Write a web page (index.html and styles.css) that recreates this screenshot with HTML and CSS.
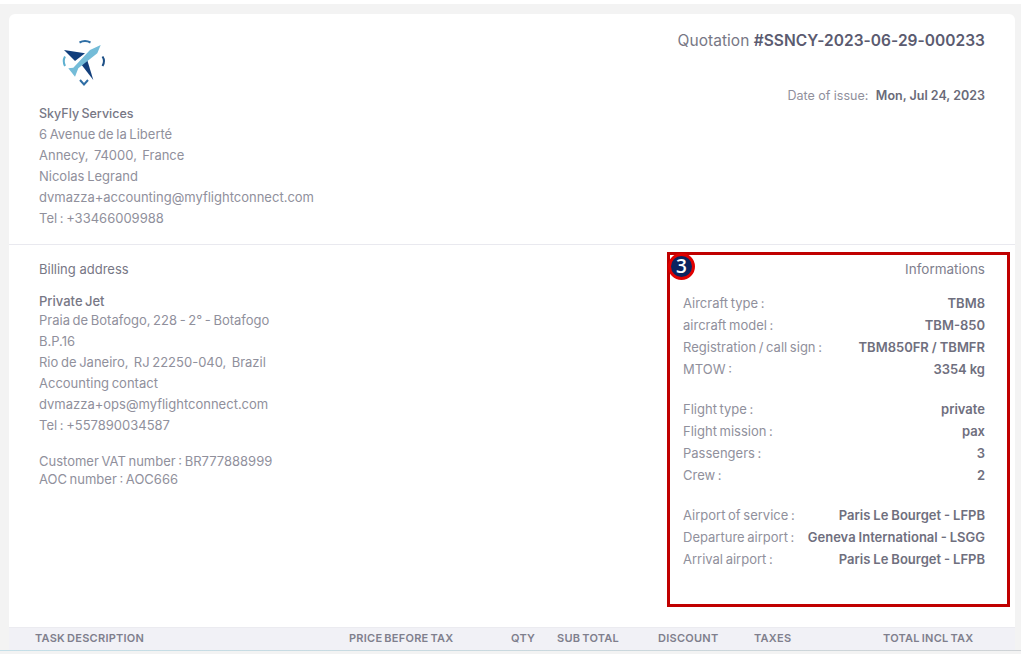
FILE: index.html
```html
<!DOCTYPE html>
<html lang="en">
<head>
<meta charset="utf-8">
<title>Quotation</title>
<link rel="stylesheet" href="styles.css">
</head>
<body>
<main class="card">
  <header class="top">
    <div class="company">
      <svg class="logo" viewBox="0 0 50 50" width="50" height="50" aria-hidden="true">
        <path d="M18.5 4.5 Q24 1.5 29.5 4.5" fill="none" stroke="#2f6ea5" stroke-width="2"/>
        <path d="M4 18.5 Q1.5 23 4 28" fill="none" stroke="#5fb0d0" stroke-width="2"/>
        <path d="M41.5 18.5 Q44.5 23 41.5 28" fill="none" stroke="#1d4f86" stroke-width="2"/>
        <path d="M19 42 L23 46.5 L27 42" fill="none" stroke="#2f6ea5" stroke-width="2"/>
        <path d="M3 12 L24 15.3 L14 23 Z" fill="#123f7c"/>
        <path d="M25.7 20.3 L32.3 42 L20.7 27 Z" fill="#123f7c"/>
        <path d="M39.7 7 L29 12 L12.3 29.7 L7.3 30.3 L14 38.7 L17.3 30.3 L36.3 15.3 Z" fill="#74bcd8"/>
      </svg>
      <p class="name">SkyFly Services</p>
      <p>6 Avenue de la Liberté</p>
      <p>Annecy,&nbsp; 74000,&nbsp; France</p>
      <p>Nicolas Legrand</p>
      <p>dvmazza+accounting@myflightconnect.com</p>
      <p>Tel : +33466009988</p>
    </div>
    <div class="quote">
      <h1>Quotation <b>#SSNCY-2023-06-29-000233</b></h1>
      <p class="issue">Date of issue: <b>Mon, Jul 24, 2023</b></p>
    </div>
  </header>
  <section class="details">
    <div class="billing">
      <h2>Billing address</h2>
      <p class="name">Private Jet</p>
      <p>Praia de Botafogo, 228 - 2° - Botafogo</p>
      <p>B.P.16</p>
      <p>Rio de Janeiro,&nbsp; RJ 22250-040,&nbsp; Brazil</p>
      <p>Accounting contact</p>
      <p>dvmazza+ops@myflightconnect.com</p>
      <p>Tel : +557890034587</p>
      <div class="ids">
        <p>Customer VAT number : BR777888999</p>
        <p>AOC number : AOC666</p>
      </div>
    </div>
    <div class="info">
      <h2>Informations</h2>
      <dl class="group">
        <div><dt>Aircraft type :</dt><dd>TBM8</dd></div>
        <div><dt>aircraft model :</dt><dd>TBM-850</dd></div>
        <div><dt>Registration / call sign :</dt><dd>TBM850FR / TBMFR</dd></div>
        <div><dt>MTOW :</dt><dd>3354 kg</dd></div>
      </dl>
      <dl class="group">
        <div><dt>Flight type :</dt><dd>private</dd></div>
        <div><dt>Flight mission :</dt><dd>pax</dd></div>
        <div><dt>Passengers :</dt><dd>3</dd></div>
        <div><dt>Crew :</dt><dd>2</dd></div>
      </dl>
      <dl class="group">
        <div><dt>Airport of service :</dt><dd>Paris Le Bourget - LFPB</dd></div>
        <div><dt>Departure airport :</dt><dd>Geneva International - LSGG</dd></div>
        <div><dt>Arrival airport :</dt><dd>Paris Le Bourget - LFPB</dd></div>
      </dl>
    </div>
  </section>
  <div class="thead">
    <span>Task description</span>
    <span>Price before tax</span>
    <span>Qty</span>
    <span>Sub total</span>
    <span>Discount</span>
    <span>Taxes</span>
    <span>Total incl tax</span>
  </div>
</main>
<div class="baseline"></div>
<div class="callout"><span class="badge">3</span></div>
</body>
</html>
```
FILE: styles.css
```css
* { box-sizing: border-box; }
html, body { margin: 0; padding: 0; height: 654px; overflow: hidden; }
body {
  background: linear-gradient(#fff 0 4px, #f3f3f3 4px);
  padding: 14px 6px 0 9px;
  position: relative;
  font-family: Inter, "Liberation Sans", sans-serif;
  font-size: 13px;
  color: #90909c;
  word-spacing: -1px;
}
p, h1, h2, dl, dd { margin: 0; font-weight: 400; }
b { font-weight: 600; }
.card {
  background: #fff;
  border-radius: 6px 6px 0 0;
  height: 636px;
  display: flex;
  flex-direction: column;
}
.top {
  display: flex;
  justify-content: space-between;
  height: 231px;
  padding: 0 30px;
  border-bottom: 1px solid #e9e9ef;
}
.company { padding-top: 24px; }
.company p { line-height: 21px; }
.logo { display: block; margin: 0 0 15px 22px; }
.name { color: #777785; font-weight: 500; }
.company .name { font-size: 12.5px; }
.quote { text-align: right; padding-top: 16px; }
h1 { font-size: 15.5px; line-height: 22px; color: #777785; word-spacing: 0; letter-spacing: 0.03px; }
h1 b { color: #5b5b70; }
.issue { margin-top: 35px; font-size: 12.5px; line-height: 18px; word-spacing: 0; }
.issue b { color: #6a6a78; margin-left: 4px; }
.details { flex: 1; display: flex; justify-content: space-between; padding: 0 30px; }
.billing { padding-top: 14px; }
.billing p { line-height: 21px; }
.billing h2 { font-size: 13px; line-height: 20px; color: #777785; margin-bottom: 12px; word-spacing: 0; }
.billing .name { line-height: 20px; margin-bottom: -1px; }
.billing .ids { margin-top: 16px; }
.billing .ids p { line-height: 18px; }
.info { width: 302px; padding-top: 14px; }
.info h2 { font-size: 13.5px; line-height: 20px; text-align: right; color: #80808e; margin-bottom: 13px; }
.group { margin-bottom: 18px; }
.group div { display: flex; justify-content: space-between; line-height: 22px; white-space: nowrap; }
.group dd { font-weight: 600; color: #6f6f7e; word-spacing: -0.3px; }
.thead {
  height: 23px;
  padding-bottom: 2px;
  background: #f1f1f6;
  border-top: 1px solid #ebebf0;
  padding-left: 26px;
  display: grid;
  grid-template-columns: 314px 162px 46px 101px 96px 129px 1fr;
  align-items: center;
  font-size: 11px;
  font-weight: 600;
  letter-spacing: 0.25px;
  text-transform: uppercase;
  color: #7f7f8d;
}
.baseline {
  height: 1px;
  margin: 0 -6px 0 -9px;
  background: linear-gradient(90deg, #c4dfe8, #cfd3d6);
}
.callout {
  position: absolute;
  left: 667px;
  top: 252px;
  width: 343px;
  height: 355px;
  border: 3px solid #c00000;
}
.badge {
  position: absolute;
  left: -2px;
  top: -2px;
  width: 27px;
  height: 27px;
  border-radius: 50%;
  background: #0b2460;
  border: 3px solid #e00000;
  color: #fff;
  font: 600 19px/21px "Open Sans", sans-serif;
  text-align: center;
}
```
